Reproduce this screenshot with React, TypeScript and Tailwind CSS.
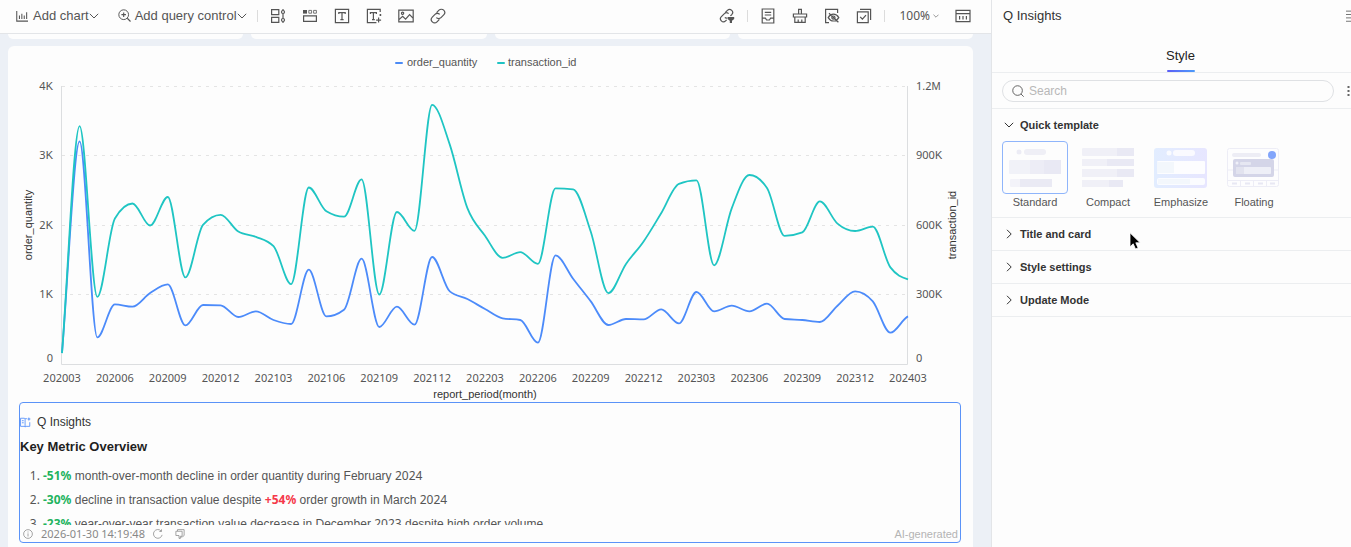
import React, { useState } from "react";

const NUM = "font-['Noto_Sans',sans-serif]";

interface IconProps {
  children: React.ReactNode;
  className?: string;
}

const Icon = ({ children, className = "size-4" }: IconProps) => (
  <svg
    viewBox="0 0 16 16"
    fill="none"
    stroke="currentColor"
    strokeWidth="1.2"
    className={`shrink-0 ${className}`}
    aria-hidden="true"
  >
    {children}
  </svg>
);

const Chevron = ({ open, className }: { open?: boolean; className?: string }) => (
  <svg
    viewBox="0 0 10 10"
    fill="none"
    stroke="currentColor"
    strokeWidth="1"
    className={`shrink-0 ${className ?? "size-[10px]"}`}
    aria-hidden="true"
  >
    <path d={open ? "M0.8 2.8 5 7 9.2 2.8" : "M3 0.8 7.2 5 3 9.2"} />
  </svg>
);

const insertTools = [
  {
    label: "Tab container",
    icon: (
      <>
        <path d="M1.6 1.6h7.2v5H1.6zM1.6 9.4h7.2v5H1.6zM13 1v1.4M13 5.6v5M13 13.6V15" />
        <circle cx="13" cy="4" r="1.5" />
        <circle cx="13" cy="12" r="1.5" />
      </>
    ),
  },
  {
    label: "Tabs",
    icon: (
      <>
        <path d="M1 2h4v3.6H1z" fill="currentColor" stroke="none" />
        <path d="M6.8 2.4h2.8v2.8H6.8zM11.6 2.4h2.8v2.8h-2.8z" strokeWidth="0.8" />
        <path d="M1.6 7.8h12.8v5.6H1.6z" />
      </>
    ),
  },
  {
    label: "Text",
    icon: <path d="M1.4 1.4h13.2v13.2H1.4zM4.8 6V4.6h6.4V6M8 4.6v7M6.4 11.6h3.2" />,
  },
  {
    label: "Smart text",
    icon: (
      <>
        <path d="M14.2 4V1.4H1.4v13.2h9M4.4 6V4.6h6V6M7.4 4.6v7M6 11.6h2.8" />
        <path d="M12.6 9.6v5M10.1 12.1h5M14.4 6v2M13.4 7h2" />
      </>
    ),
  },
  {
    label: "Image",
    icon: (
      <>
        <path d="M0.8 2.2h14.4v11.6H0.8zM1 11.6l3.6-3.2 3 2.8 4-4.6 3.4 3.6" />
        <circle cx="4.6" cy="5.2" r="1.1" />
      </>
    ),
  },
  {
    label: "Link",
    icon: (
      <path d="M6.6 4.6 9 2.2a3.3 3.3 0 0 1 4.7 4.7L11 9.6a3.3 3.3 0 0 1-4.7 0M9.4 11.4 7 13.8A3.3 3.3 0 0 1 2.3 9.1L5 6.4a3.3 3.3 0 0 1 4.7 0" />
    ),
  },
];

const pageTools = [
  {
    label: "Form",
    icon: <path d="M2.2 1h11.6v14H2.2zM4.8 4.4h6.4M4.8 7h6.4M2.2 10.2h3.2l1.2 1.8h2.8l1.2-1.8h3.2" />,
  },
  {
    label: "Clean",
    icon: <path d="M6.6 6V1.4h2.8V6M1.4 9V6h13.2v3zM2.8 9v5.4h10.4V9M6.2 14.4v-2.8M9.8 14.4v-2.8" />,
  },
  {
    label: "Hidden items",
    icon: (
      <>
        <path d="M13.6 5V1.4H1.6v13.2H5" />
        <path d="M4.2 9.6c1.4-2.4 3-3.4 5.2-3.4s4 1 5.4 3.4c-1.4 2.4-3.2 3.4-5.4 3.4s-3.8-1-5.2-3.4zM5 5.2l9.4 9" />
        <circle cx="9.4" cy="9.6" r="1.6" />
      </>
    ),
  },
  {
    label: "Batch select",
    icon: <path d="M1.4 3.8h10.8v10.8H1.4zM4 1.4h10.6V12M4.2 8.8l2.2 2.4 3.6-4" />,
  },
];

const Separator = ({ className }: { className: string }) => (
  <span className={`h-3 w-px bg-[#dcdcdc] ${className}`} />
);

const Toolbar = () => (
  <header className="flex h-[34px] shrink-0 items-center border-b border-[#e3e5e8] bg-[#fdfdfd] pb-[2px] pl-4 pr-5 text-[#555]">
    <button className="flex items-center text-[13px] leading-4">
      <Icon className="mr-[5px] size-3">
        <path d="M1 1.4v13.4h15M4.6 12V7.4M7.8 12V5M11 12V7.4M14.2 12V3" strokeWidth="1.4" />
      </Icon>
      Add chart
      <Chevron open />
    </button>
    <button className="ml-[19px] flex items-center text-[13px] leading-4">
      <Icon className="mr-1 size-[13px]">
        <circle cx="7" cy="7" r="6" />
        <path d="M7 4.2v5.6M4.2 7h5.6M11.4 11.4l4 4" strokeWidth="1.4" />
      </Icon>
      Add query control
      <Chevron open />
    </button>
    <Separator className="ml-[10px] mr-3" />
    <div className="flex gap-4">
      {insertTools.map((tool) => (
        <button key={tool.label} aria-label={tool.label}>
          <Icon>{tool.icon}</Icon>
        </button>
      ))}
    </div>
    <button aria-label="Linked filters" className="ml-auto">
      <Icon>
        <path d="M6.4 4.4 8.4 2.4a3 3 0 0 1 4.3 4.3l-1.3 1.2M9.6 5.6a3 3 0 0 0-4.2 0L2.4 8.6a3 3 0 0 0 4.2 4.3l1-1M5.8 9.6a3 3 0 0 0 2.4.4" />
        <path d="M8.6 9h6.6v2l-2.2 1.8V15h-2.2v-2.2L8.6 11z" fill="currentColor" stroke="none" />
      </Icon>
    </button>
    <Separator className="ml-3 mr-3" />
    <div className="flex gap-4">
      {pageTools.map((tool) => (
        <button key={tool.label} aria-label={tool.label}>
          <Icon>{tool.icon}</Icon>
        </button>
      ))}
    </div>
    <Separator className="ml-3 mr-[14px]" />
    <button className="flex items-center gap-[3px] text-xs leading-4">
      <span className={NUM}>100%</span>
      <Chevron open className="size-[6px]" />
    </button>
    <button aria-label="Data table" className="ml-4">
      <Icon>
        <path d="M1 2.4h14v11.2H1zM1 5.6h14M4.6 8v3.6M8 8v3.6M11.4 8v3.6" />
      </Icon>
    </button>
  </header>
);

// monthly values, 202003 - 202403
const orders = [
  158, 3203, 383, 858, 825, 1022, 1145, 555, 849, 843, 676, 757, 633, 576, 1357, 685, 781, 1515,
  532, 825, 566, 1540, 1045, 935, 791, 656, 633, 307, 1563, 1227, 901, 561, 648, 642, 786, 584,
  1036, 757, 839, 757, 868, 648, 633, 604, 839, 1045, 901, 450, 685,
];

// in thousands
const transactions = [
  47, 1027, 290, 628, 693, 598, 721, 374, 601, 644, 572, 549, 509, 345, 762, 659, 636, 797, 300,
  656, 575, 1119, 947, 673, 554, 458, 483, 432, 758, 754, 571, 306, 432, 529, 652, 778, 793, 426,
  673, 816, 760, 553, 568, 702, 606, 574, 593, 417, 365,
];

const months = [
  "202003", "202006", "202009", "202012", "202103", "202106", "202109", "202112", "202203",
  "202206", "202209", "202212", "202303", "202306", "202309", "202312", "202403",
];

const PLOT = { left: 54, right: 900, top: 40, bottom: 318 };
const STEP = (PLOT.right - PLOT.left) / (orders.length - 1);

// monotone cubic through all the points
const linePath = (values: number[], max: number) => {
  const ys = values.map((v) => PLOT.bottom - (v / max) * (PLOT.bottom - PLOT.top));
  const slopes = ys.slice(1).map((y, i) => (y - ys[i]) / STEP);
  const tangents = ys.map((_, i) => {
    if (i === 0) return slopes[0];
    if (i === ys.length - 1) return slopes[i - 1] / 2;
    const a = slopes[i - 1];
    const b = slopes[i];
    if (a * b <= 0) return 0;
    return Math.sign(a) * Math.min(Math.abs(a), Math.abs(b), Math.abs(a + b) / 4) * 2;
  });
  let d = `M${PLOT.left} ${ys[0].toFixed(1)}`;
  for (let i = 1; i < ys.length; i++) {
    const x0 = PLOT.left + STEP * (i - 1);
    const x1 = x0 + STEP;
    const t = STEP / 3;
    d += `C${(x0 + t).toFixed(1)} ${(ys[i - 1] + tangents[i - 1] * t).toFixed(1)} ${(x1 - t).toFixed(1)} ${(
      ys[i] -
      tangents[i] * t
    ).toFixed(1)} ${x1.toFixed(1)} ${ys[i].toFixed(1)}`;
  }
  return d;
};

const ticks = [
  { y: 40, left: ["4", "K"], right: ["1.2", "M"] },
  { y: 109, left: ["3", "K"], right: ["900", "K"] },
  { y: 179, left: ["2", "K"], right: ["600", "K"] },
  { y: 248, left: ["1", "K"], right: ["300", "K"] },
  { y: 312, left: ["0", ""], right: ["0", ""] },
];

const TrendChart = () => (
  <svg viewBox="0 0 965 356" className="w-full shrink-0 text-[11px]" role="img" aria-label="Monthly trend">
    <rect x="387" y="16" width="8" height="2" rx="1" fill="#4c8bf5" />
    <text x="399" y="20" fill="#555">
      order_quantity
    </text>
    <rect x="489" y="16" width="8" height="2" rx="1" fill="#1fc3c3" />
    <text x="500" y="20" fill="#555">
      transaction_id
    </text>
    {ticks.map((tick) => (
      <g key={tick.y} fill="#555">
        {tick.left[1] && (
          <line x1="54" x2="900" y1={tick.y + 0.5} y2={tick.y + 0.5} stroke="#e4e4e4" strokeDasharray="3 5" />
        )}
        <text x="45" y={tick.y + 4} textAnchor="end">
          <tspan className={NUM}>{tick.left[0]}</tspan>
          {tick.left[1]}
        </text>
        <text x="908" y={tick.y + 4}>
          <tspan className={NUM}>{tick.right[0]}</tspan>
          {tick.right[1]}
        </text>
      </g>
    ))}
    <path d="M53.5 40V318.5H899.5V40" fill="none" stroke="#dcdee0" />
    {months.map((month, i) => (
      <text key={month} x={PLOT.left + STEP * 3 * i} y="336" textAnchor="middle" fill="#555" className={NUM}>
        {month}
      </text>
    ))}
    <text x="477" y="352" textAnchor="middle" fill="#333">
      report_period(month)
    </text>
    <text transform="translate(24 179) rotate(-90)" textAnchor="middle" fill="#333">
      order_quantity
    </text>
    <text transform="translate(948 179) rotate(-90)" textAnchor="middle" fill="#333">
      transaction_id
    </text>
    <path d={linePath(orders, 4000)} fill="none" stroke="#4c8bfa" strokeWidth="1.8" />
    <path d={linePath(transactions, 1200)} fill="none" stroke="#1fc5c3" strokeWidth="1.8" />
  </svg>
);

const Down = ({ children }: { children: React.ReactNode }) => (
  <strong className="font-bold text-[#22b35e]">{children}</strong>
);

const Insights = () => (
  <section className="mb-1 ml-[11px] mr-3 flex min-h-0 flex-1 flex-col rounded border border-[#5b93f8] bg-[#fdfdfd]">
    <div className="min-h-0 flex-1 overflow-hidden">
      <div className="mt-[9px] flex items-center text-xs leading-5 text-[#333]">
        <Icon className="mr-[6px] size-[11px] text-[#4c8bfa]">
          <path d="M7.4 3v11.4M10 2.4H7.4L6 1.8H0.8v11.8H6l1.4.8 1.4-.8h5.4V7.6M2.8 5.4h2.6M2.8 8.4h2.6" />
          <path d="m13 0 .8 2.2 2.2.8-2.2.8L13 6l-.8-2.2L10 3l2.2-.8z" fill="currentColor" stroke="none" />
        </Icon>
        Q Insights
      </div>
      <h2 className="mt-[5px] text-[13px] font-bold leading-5 text-[#1f1f1f]">Key Metric Overview</h2>
      <ol className="mt-[7px] list-decimal pl-[23px] font-['Noto_Sans',sans-serif] text-xs leading-6 text-[#555]">
        <li>
          <Down>-51%</Down>
          <span className="font-['Liberation_Sans',sans-serif]"> month-over-month decline in order quantity during February </span>
          2024
        </li>
        <li>
          <Down>-30%</Down>
          <span className="font-['Liberation_Sans',sans-serif]"> decline in transaction value despite </span>
          <strong className="font-bold text-[#f5394a]">+54%</strong>
          <span className="font-['Liberation_Sans',sans-serif]"> order growth in March </span>
          2024
        </li>
        <li>
          <Down>-23%</Down>
          <span className="font-['Liberation_Sans',sans-serif]"> year-over-year transaction value decrease in December </span>
          2023
          <span className="font-['Liberation_Sans',sans-serif]"> despite high order volume</span>
        </li>
      </ol>
    </div>
    <footer className="flex h-[17px] shrink-0 items-center pl-[3px] pr-[2px] text-[11px] leading-4 text-[#888]">
      <Icon className="mr-2 size-[10px]">
        <circle cx="8" cy="8" r="7" />
        <path d="M8 7v5M8 4v1.6" />
      </Icon>
      <time className={NUM}>2026-01-30 14:19:48</time>
      <button aria-label="Refresh" className="ml-2">
        <Icon className="size-[10px]">
          <path d="M14.6 9.4A7 7 0 1 1 13 3.2M13.6 0.6v3.4h-3.4" />
        </Icon>
      </button>
      <button aria-label="Copy" className="ml-3">
        <Icon className="size-[10px]">
          <path d="M4 3.4V1h10.6v9.4L12 12.6M1.4 3.6h10v8l-3 3.4H6.4v-4.6h-5zM8.4 15v-3.4h3" />
        </Icon>
      </button>
      <span className="ml-auto text-[#b4b4b4]">AI-generated</span>
    </footer>
  </section>
);

const templates = [
  {
    name: "Standard",
    art: (
      <>
        <circle cx="17" cy="11" r="2.5" fill="#ececf5" />
        <rect x="22" y="8" width="22" height="6" rx="3" fill="#efeff6" />
        <rect x="7" y="19" width="52" height="14" rx="1" fill="#f1f2f8" />
        <path d="M28 19h31v14H28z" fill="#ededf6" />
        <path d="M42 19h17v14H42z" fill="#e9e9f4" />
        <rect x="8" y="38" width="42" height="8" rx="1" fill="#f3f3f9" />
        <path d="M18 38h32v8H18z" fill="#eaeaf4" />
      </>
    ),
  },
  {
    name: "Compact",
    art: (
      <>
        <rect x="7" y="7" width="52" height="8" rx="1" fill="#f0f0f7" />
        <path d="M42 7h17v8H42zM32 18h27v7H32zM42 28h17v8H42zM34 39h14v7H34z" fill="#e9e9f4" />
        <path d="M7 18h25v7H7zM7 28h35v8H7zM7 39h27v7H7z" fill="#f0f0f7" />
      </>
    ),
  },
  {
    name: "Emphasize",
    art: (
      <>
        <defs>
          <linearGradient id="emphasize" x1="0" x2="1">
            <stop stopColor="#e2edff" />
            <stop offset="1" stopColor="#e7e6ff" />
          </linearGradient>
        </defs>
        <rect x="6" y="7" width="53" height="40" rx="3" fill="url(#emphasize)" />
        <circle cx="21" cy="12" r="2.5" fill="#fafbff" />
        <rect x="25" y="9" width="22" height="6" rx="3" fill="#fafaff" />
        <rect x="9" y="20" width="48" height="13" rx="1" fill="#fdfdff" />
        <rect x="9" y="37" width="48" height="7" rx="2" fill="#fbfcff" />
        <path d="M9 21h17v11H9zM10 38h32v5H10z" fill="#f3f7fc" />
      </>
    ),
  },
  {
    name: "Floating",
    art: (
      <>
        <rect x="6.5" y="7.5" width="51" height="38" rx="2" fill="#fdfdfe" stroke="#ededf6" />
        <path d="M7 29h51M7 39.5h51M19.5 39v6M32.5 39v6M45.5 39v6" stroke="#ededf6" />
        <path d="M11 42.5h5M24 42.5h5M37 42.5h5M49 42.5h5" stroke="#e8e8f3" strokeWidth="2" />
        <rect x="11" y="12" width="29" height="4" rx="2" fill="#ededf5" />
        <rect x="12" y="18" width="41" height="18" rx="2" fill="#d4d5e8" />
        <circle cx="16" cy="22" r="1.5" fill="#eff0f8" />
        <rect x="19" y="21" width="11" height="3" rx="1" fill="#e6e7f2" />
        <rect x="15" y="26" width="35" height="7" rx="1" fill="#eeeff7" />
        <path d="M15 26h8v7h-8z" fill="#e2e3ef" />
        <circle cx="51" cy="14" r="4" fill="#82a5fb" />
      </>
    ),
  },
];

const StylePanel = () => {
  const [template, setTemplate] = useState("Standard");
  const [search, setSearch] = useState("");

  return (
    <aside className="relative w-[360px] shrink-0 overflow-hidden border-l border-[#e3e5e8] bg-[#fdfdfd] text-[#333]">
      {/* the panel runs on past the window edge */}
      <div className="w-[377px]">
        <div className="flex h-8 items-center justify-between pl-[11px] pr-[11px] text-[13px] leading-4">
          <h1>Q Insights</h1>
          <button aria-label="Menu" className="text-[#666]">
            <Icon className="size-3">
              <path d="M0 1.5h16M0 6h16M0 10.5h16M0 15h16" />
            </Icon>
          </button>
        </div>
        <div className="flex h-[41px] justify-center border-b border-[#eceef0]">
          <button className="flex flex-col items-center text-[13px] leading-4 text-[#222]">
            <span className="mt-4">Style</span>
            <span className="mt-auto h-[2px] w-7 rounded-full bg-linear-to-r from-[#5b5cf6] to-[#4c9bfa]" />
          </button>
        </div>
        <div className="flex h-9 items-center border-b border-[#eceef0] pl-[10px] pr-3">
          <label className="flex h-[22px] w-[332px] items-center rounded-full border border-[#dfe1e4] pl-[9px] text-[#555]">
            <Icon className="mr-[5px] size-3">
              <circle cx="7.4" cy="7.4" r="6.4" />
              <path d="m12 12 3.6 3.6" />
            </Icon>
            <input
              value={search}
              onChange={(e) => setSearch(e.target.value)}
              placeholder="Search"
              aria-label="Search"
              className="min-w-0 flex-1 bg-transparent text-xs leading-4 outline-none placeholder:text-[#b8b8b8]"
            />
          </label>
          <button aria-label="More" className="ml-[13px] text-[#666]">
            <svg viewBox="0 0 3 12" fill="currentColor" className="h-3 w-[3px]">
              <path d="M0.5 1h2v2h-2zM0.5 5h2v2h-2zM0.5 9h2v2h-2z" />
            </svg>
          </button>
        </div>

        <section className="border-b border-[#eceef0] pb-[6px]">
          <button className="flex h-8 w-full items-center gap-[6px] pl-3 text-[11px] font-bold">
            <Chevron open />
            Quick template
          </button>
          <div className="flex gap-[7px] pl-[10px]">
            {templates.map((item) => (
              <button
                key={item.name}
                onClick={() => setTemplate(item.name)}
                className="w-[66px] text-[11px] leading-[17px] text-[#555]"
              >
                <span
                  className={`flex h-[53px] rounded border ${
                    template === item.name ? "border-[#8fb5fb]" : "border-transparent"
                  }`}
                >
                  <svg viewBox="1 1 64 51" fill="none" className="size-full" aria-hidden="true">
                    {item.art}
                  </svg>
                </span>
                {item.name}
              </button>
            ))}
          </div>
        </section>
        {["Title and card", "Style settings", "Update Mode"].map((name) => (
          <button
            key={name}
            className="flex h-[33px] w-full items-center gap-[6px] border-b border-[#eceef0] pl-3 text-[11px] font-bold"
          >
            <Chevron />
            {name}
          </button>
        ))}
      </div>
      <svg viewBox="0 0 12 18" className="absolute left-[137px] top-[232px] h-[18px] w-3" aria-hidden="true">
        <path
          d="M1 .8v14l3.2-3 2.3 5.2 2.6-1.1-2.3-5.1h4.4z"
          fill="#000"
          stroke="#fff"
          strokeWidth="0.8"
        />
      </svg>
    </aside>
  );
};

const App = () => {
  return (
    <div className="flex h-screen overflow-hidden bg-[#ecf0f6] font-['Liberation_Sans',sans-serif]">
      <main className="flex min-w-0 flex-1 flex-col">
        <Toolbar />
        <div className="grid grid-cols-4 gap-2 pl-2 pr-[18px]">
          {[0, 1, 2, 3].map((n) => (
            <div key={n} className="h-[5px] rounded-b-md bg-[#fdfdfd]" />
          ))}
        </div>
        <div className="ml-2 mr-[18px] mt-[7px] flex min-h-0 flex-1 flex-col rounded-t-md bg-[#fdfdfd]">
          <TrendChart />
          <Insights />
        </div>
      </main>
      <StylePanel />
    </div>
  );
};

export default App;
